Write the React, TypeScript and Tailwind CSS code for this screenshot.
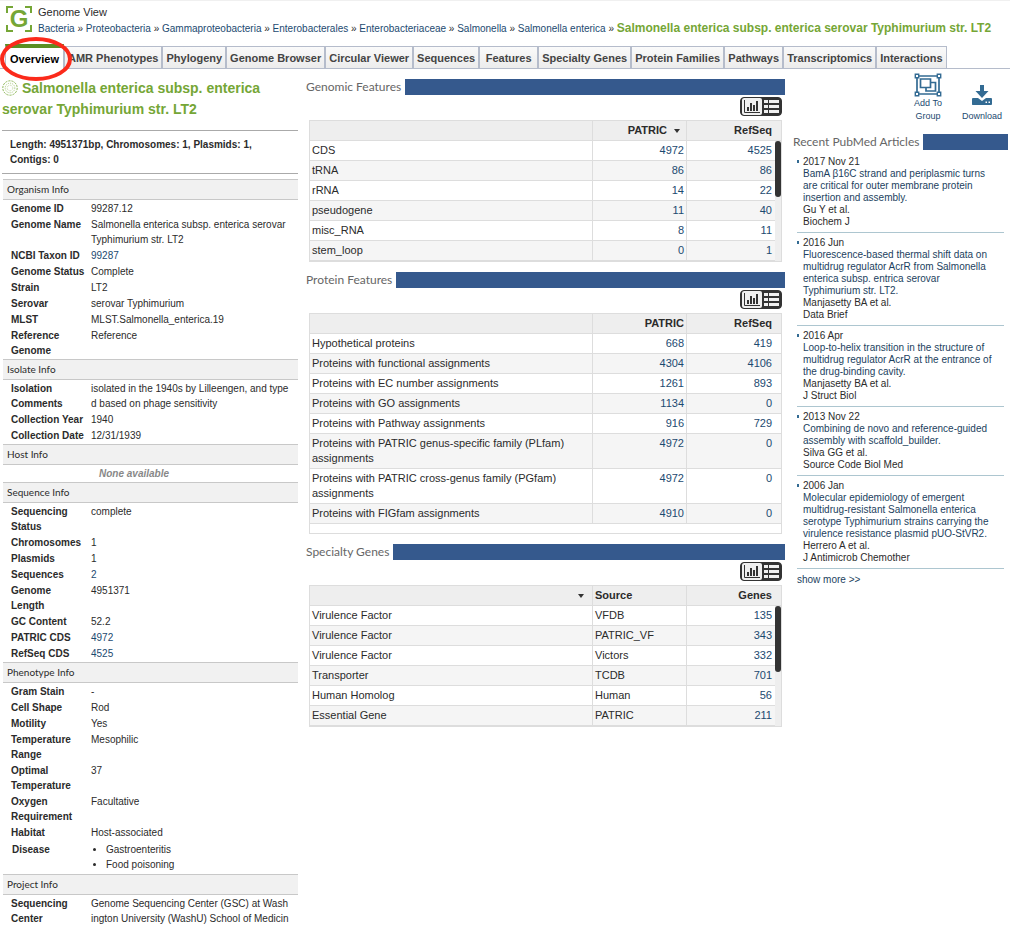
import type { ReactNode } from "react";

const lineage = [
  "Bacteria",
  "Proteobacteria",
  "Gammaproteobacteria",
  "Enterobacterales",
  "Enterobacteriaceae",
  "Salmonella",
  "Salmonella enterica",
];

const tabs = [
  "Overview",
  "AMR Phenotypes",
  "Phylogeny",
  "Genome Browser",
  "Circular Viewer",
  "Sequences",
  "Features",
  "Specialty Genes",
  "Protein Families",
  "Pathways",
  "Transcriptomics",
  "Interactions",
];

type InfoRow = { label: string; value?: string; link?: boolean; list?: string[] };

const info: { title: string; rows: InfoRow[] }[] = [
  {
    title: "Organism Info",
    rows: [
      { label: "Genome ID", value: "99287.12" },
      { label: "Genome Name", value: "Salmonella enterica subsp. enterica serovar Typhimurium str. LT2" },
      { label: "NCBI Taxon ID", value: "99287", link: true },
      { label: "Genome Status", value: "Complete" },
      { label: "Strain", value: "LT2" },
      { label: "Serovar", value: "serovar Typhimurium" },
      { label: "MLST", value: "MLST.Salmonella_enterica.19" },
      { label: "Reference\nGenome", value: "Reference" },
    ],
  },
  {
    title: "Isolate Info",
    rows: [
      { label: "Isolation\nComments", value: "isolated in the 1940s by Lilleengen, and typed based on phage sensitivity" },
      { label: "Collection Year", value: "1940" },
      { label: "Collection Date", value: "12/31/1939" },
    ],
  },
  { title: "Host Info", rows: [] },
  {
    title: "Sequence Info",
    rows: [
      { label: "Sequencing\nStatus", value: "complete" },
      { label: "Chromosomes", value: "1" },
      { label: "Plasmids", value: "1" },
      { label: "Sequences", value: "2", link: true },
      { label: "Genome\nLength", value: "4951371" },
      { label: "GC Content", value: "52.2" },
      { label: "PATRIC CDS", value: "4972", link: true },
      { label: "RefSeq CDS", value: "4525", link: true },
    ],
  },
  {
    title: "Phenotype Info",
    rows: [
      { label: "Gram Stain", value: "-" },
      { label: "Cell Shape", value: "Rod" },
      { label: "Motility", value: "Yes" },
      { label: "Temperature\nRange", value: "Mesophilic" },
      { label: "Optimal\nTemperature", value: "37" },
      { label: "Oxygen\nRequirement", value: "Facultative" },
      { label: "Habitat", value: "Host-associated" },
      { label: "Disease", list: ["Gastroenteritis", "Food poisoning"] },
    ],
  },
  {
    title: "Project Info",
    rows: [
      {
        label: "Sequencing\nCenter",
        value: "Genome Sequencing Center (GSC) at Washington University (WashU) School of Medicin",
      },
    ],
  },
];

const genomic = [
  ["CDS", "4972", "4525"],
  ["tRNA", "86", "86"],
  ["rRNA", "14", "22"],
  ["pseudogene", "11", "40"],
  ["misc_RNA", "8", "11"],
  ["stem_loop", "0", "1"],
];

const protein = [
  ["Hypothetical proteins", "668", "419"],
  ["Proteins with functional assignments", "4304", "4106"],
  ["Proteins with EC number assignments", "1261", "893"],
  ["Proteins with GO assignments", "1134", "0"],
  ["Proteins with Pathway assignments", "916", "729"],
  ["Proteins with PATRIC genus-specific family (PLfam) assignments", "4972", "0"],
  ["Proteins with PATRIC cross-genus family (PGfam) assignments", "4972", "0"],
  ["Proteins with FIGfam assignments", "4910", "0"],
];

const specialty = [
  ["Virulence Factor", "VFDB", "135"],
  ["Virulence Factor", "PATRIC_VF", "343"],
  ["Virulence Factor", "Victors", "332"],
  ["Transporter", "TCDB", "701"],
  ["Human Homolog", "Human", "56"],
  ["Essential Gene", "PATRIC", "211"],
];

const articles = [
  {
    date: "2017 Nov 21",
    title: "BamA β16C strand and periplasmic turns are critical for outer membrane protein insertion and assembly.",
    author: "Gu Y et al.",
    journal: "Biochem J",
  },
  {
    date: "2016 Jun",
    title:
      "Fluorescence-based thermal shift data on multidrug regulator AcrR from Salmonella enterica subsp. entrica serovar Typhimurium str. LT2.",
    author: "Manjasetty BA et al.",
    journal: "Data Brief",
  },
  {
    date: "2016 Apr",
    title:
      "Loop-to-helix transition in the structure of multidrug regulator AcrR at the entrance of the drug-binding cavity.",
    author: "Manjasetty BA et al.",
    journal: "J Struct Biol",
  },
  {
    date: "2013 Nov 22",
    title: "Combining de novo and reference-guided assembly with scaffold_builder.",
    author: "Silva GG et al.",
    journal: "Source Code Biol Med",
  },
  {
    date: "2006 Jan",
    title:
      "Molecular epidemiology of emergent multidrug-resistant Salmonella enterica serotype Typhimurium strains carrying the virulence resistance plasmid pUO-StVR2.",
    author: "Herrero A et al.",
    journal: "J Antimicrob Chemother",
  },
];

function Logo() {
  return (
    <div className="relative mt-px grid size-7 shrink-0 place-items-center">
      <svg viewBox="0 0 28 28" className="absolute inset-0 size-7" fill="none" stroke="#75a636" strokeWidth="2" aria-hidden="true">
        <path d="M2 8V2H8M20 2H26V8M26 20V26H20M8 26H2V20" />
      </svg>
      <span className="text-2xl leading-7 font-bold text-[#75a636]">G</span>
    </div>
  );
}

function Header() {
  return (
    <header className="flex gap-[5px] border-t border-[#f0f0f0] pt-[3px] pl-[5px]">
      <Logo />
      <div className="text-[10px] leading-4">
        <div className="text-[11px]">Genome View</div>
        <nav aria-label="Lineage" className="whitespace-nowrap">
          {lineage.map((name) => (
            <span key={name}>
              <a href="#" className="text-[#1c4a70]">{name}</a> »{" "}
            </span>
          ))}
          <span className="text-xs leading-4 font-bold text-[#75a636]">
            Salmonella enterica subsp. enterica serovar Typhimurium str. LT2
          </span>
        </nav>
      </div>
    </header>
  );
}

function Tabs() {
  return (
    <div className="relative mt-[7px]">
      <div role="tablist" className="flex items-end border-b border-[#b5bccb] pl-[5px]">
        {tabs.map((tab, i) => (
          <button
            key={tab}
            role="tab"
            type="button"
            aria-selected={i === 0}
            className={
              i === 0
                ? "-mb-px h-[25px] min-w-[59px] border-x border-t-4 border-x-[#b5bccb] border-t-[#5b8f22] bg-white px-[3px] pt-px font-bold whitespace-nowrap text-black"
                : "h-[22px] min-w-[59px] border-x border-t border-[#b5bccb] bg-linear-to-b from-[#fafafa] to-[#ececec] px-[3px] pt-px font-bold whitespace-nowrap text-[#444]"
            }
          >
            {tab}
          </button>
        ))}
      </div>
      <svg viewBox="0 0 74 46" className="pointer-events-none absolute -top-2 -left-px h-[46px] w-[74px]" aria-hidden="true">
        <ellipse cx="37" cy="23" rx="34" ry="20" fill="none" stroke="#fb2a1b" strokeWidth="4" />
      </svg>
    </div>
  );
}

function GenomeBadge() {
  return (
    <svg viewBox="0 0 16 16" className="mr-1 inline-block size-4 align-[-3px]" fill="none" stroke="#8fb85a" aria-hidden="true">
      <circle cx="8" cy="8" r="7.2" strokeWidth="1" strokeDasharray="2.2 1" />
      <circle cx="8" cy="8" r="4.8" strokeWidth="0.7" strokeDasharray="1.2 1" />
      <circle cx="8" cy="8" r="2.8" strokeWidth="0.6" strokeDasharray="0.8 0.8" />
    </svg>
  );
}

function InfoPanel() {
  return (
    <aside className="pl-[2px] text-[10px]">
      <h1 className="pt-[9px] text-sm leading-[21px] font-bold text-[#75a636]">
        <GenomeBadge />
        Salmonella enterica subsp. enterica serovar Typhimurium str. LT2
      </h1>
      <div className="mt-[10px] mb-[5px] border-y border-[#aaa] py-[6px] pr-8 pl-2 leading-[15px] font-bold">
        Length: 4951371bp, Chromosomes: 1, Plasmids: 1, Contigs: 0
      </div>
      <div className="ml-px">
        {info.map((section) => (
          <section key={section.title}>
            <h2 className="mb-px border-y border-[#c8c8c8] bg-[#f1f1f1] pl-1 font-['Lato',sans-serif] leading-[19px]">
              {section.title}
            </h2>
            {section.rows.length === 0 && (
              <p className="pl-24 leading-4 font-bold text-[#888] italic">None available</p>
            )}
            {section.rows.map((row) =>
              row.list ? (
                <div key={row.label} className="flex py-px pb-[2px] leading-[15px]">
                  <div className="w-[88px] pl-[9px] font-bold">{row.label}</div>
                  <ul className="list-disc pl-[15px]">
                    {row.list.map((item) => (
                      <li key={item}>{item}</li>
                    ))}
                  </ul>
                </div>
              ) : (
                <div key={row.label} className="flex pb-px leading-[15px]">
                  <div className="w-[88px] shrink-0 pl-2 font-bold whitespace-pre-line">{row.label}</div>
                  <div className={row.label === "Genome Name" ? "pr-2" : "pr-2 break-all"}>
                    {row.link ? <a href="#" className="text-[#1c4a70]">{row.value}</a> : row.value}
                  </div>
                </div>
              ),
            )}
          </section>
        ))}
      </div>
    </aside>
  );
}

function BarHeading({ children }: { children: ReactNode }) {
  return (
    <div className="flex h-4 items-center gap-1">
      <h2 className="font-['Lato',sans-serif] text-xs leading-4 whitespace-nowrap text-[#666]">{children}</h2>
      <div className="h-4 flex-1 bg-[#35598d]" />
    </div>
  );
}

function ViewToggle() {
  return (
    <div className="mt-[2px] mr-[3px] ml-auto flex h-[19px] w-[42px] overflow-hidden rounded-[4px] border border-[#333] bg-[#333]">
      <button type="button" aria-label="Chart view" className="ml-px h-[17px] w-5 rounded-[2px] bg-[#f0f0f0]">
        <svg viewBox="0 0 20 17" className="h-[17px] w-5" aria-hidden="true">
          <path d="M2.500 2V14.500H18" fill="none" stroke="#333" />
          <path d="M5 9h2v4H5zM8 5h2v8H8zM11 7h2v6h-2zM14 3h2v10h-2z" fill="#333" />
        </svg>
      </button>
      <button type="button" aria-label="Table view" className="h-[17px] w-[19px]">
        <svg viewBox="0 0 19 17" className="h-[17px] w-[19px]" fill="#f0f0f0" aria-hidden="true">
          <path d="M2 2h4v3H2zM7 2h10v3H7zM2 7h4v3H2zM7 7h10v3H7zM2 12h4v3H2zM7 12h10v3H7z" />
        </svg>
      </button>
    </div>
  );
}

function SortArrow() {
  return (
    <svg viewBox="0 0 6 4" className="inline-block h-1 w-1.5 align-middle" aria-hidden="true">
      <path d="M0 0H6L3 4Z" fill="#333" />
    </svg>
  );
}

type GridProps = {
  head: [ReactNode, ReactNode, ReactNode];
  rows: string[][];
  middleText?: boolean;
  thumb?: "short" | "long";
  label: string;
};

function DataGrid({ head, rows, middleText, thumb, label }: GridProps) {
  const mid = middleText ? "text-left" : "text-right";
  return (
    <div className={"relative mx-[3px] mt-1 border border-[#ddd]" + (thumb ? "" : " pb-[9px]")}>
      <table aria-label={label} className="w-full table-fixed border-separate border-spacing-0 leading-[15px]">
        <colgroup>
          <col />
          <col className="w-[94px]" />
          <col className="w-[94px]" />
        </colgroup>
        <thead>
          <tr className="bg-[#eee]">
            <th className="border-r border-b border-[#ddd] px-2 py-[2px] text-right">{head[0]}</th>
            <th className={"border-r border-b border-[#ddd] px-[2px] py-[2px] " + mid}>{head[1]}</th>
            <th className="border-b border-[#ddd] py-[2px] pr-[9px] text-right">{head[2]}</th>
          </tr>
        </thead>
        <tbody>
          {rows.map((row, i) => (
            <tr key={i} className="even:bg-[#f5f5f5]">
              <td className="border-r border-b border-[#ddd] py-[2px] pr-4 pl-[2px] align-top">{row[0]}</td>
              <td className={"border-r border-b border-[#ddd] px-[2px] py-[2px] align-top " + mid}>
                {middleText ? row[1] : <a href="#" className="text-[#1c4a70]">{row[1]}</a>}
              </td>
              <td className="border-b border-[#ddd] py-[2px] pr-[9px] text-right align-top">
                <a href="#" className="text-[#1c4a70]">{row[2]}</a>
              </td>
            </tr>
          ))}
        </tbody>
      </table>
      {thumb && (
        <div className="absolute top-5 right-0 bottom-0 w-1.5 bg-[#eee]">
          <div className={thumb === "short" ? "h-14 rounded-full bg-[#333]" : "h-[66px] rounded-full bg-[#333]"} />
        </div>
      )}
    </div>
  );
}

function Features() {
  return (
    <main className="flex flex-col gap-[10px] pt-[10px]">
      <section>
        <BarHeading>Genomic Features</BarHeading>
        <ViewToggle />
        <DataGrid
          label="Genomic Features"
          thumb="short"
          head={["", <span className="pr-1">PATRIC <span className="pl-1"><SortArrow /></span></span>, "RefSeq"]}
          rows={genomic}
        />
      </section>
      <section>
        <BarHeading>Protein Features</BarHeading>
        <ViewToggle />
        <DataGrid label="Protein Features" head={["", "PATRIC", "RefSeq"]} rows={protein} />
      </section>
      <section>
        <BarHeading>Specialty Genes</BarHeading>
        <ViewToggle />
        <DataGrid
          label="Specialty Genes"
          thumb="long"
          middleText
          head={[<SortArrow />, "Source", "Genes"]}
          rows={specialty}
        />
      </section>
    </main>
  );
}

function Articles() {
  return (
    <aside className="pr-[2px] text-[10px]">
      <div className="flex items-end justify-end gap-[18px] pt-1 pr-1.5 text-[9px] leading-[13px] text-[#1c4a70]">
        <button type="button" className="flex w-8 flex-col items-center">
          <svg viewBox="0 0 28 24" className="h-6 w-7" fill="none" stroke="#336b93" strokeWidth="1.700" aria-hidden="true">
            <path d="M5 3H23M5 21H23M3 5V19M25 5V19" />
            <path d="M1.300 1.300h3.400v3.400H1.300zM23.300 1.300h3.400v3.400h-3.400zM1.300 19.300h3.400v3.400H1.300zM23.300 19.300h3.400v3.400h-3.400z" strokeWidth="1.400" />
            <path d="M6.500 6H16.500V14.500H6.500zM17 9.500H21.500V18H12V14.500" />
          </svg>
          Add To Group
        </button>
        <button type="button" className="flex flex-col items-center">
          <svg viewBox="0 0 22 21" className="mb-1 h-[21px] w-[22px]" fill="#336b93" aria-hidden="true">
            <path d="M9 0h4v6h4.500L11 13 4.500 6H9z" />
            <path d="M1.500 13H7l4 3 4-3h5.500l.5 1v5.500l-1 .5H1.500l-.5-.5V14zM14.500 16.500v1.500H16v-1.500zM17.500 16.500v1.500H19v-1.500z" fillRule="evenodd" />
          </svg>
          Download
        </button>
      </div>
      <div className="mt-[11px]">
        <BarHeading>Recent PubMed Articles</BarHeading>
      </div>
      <ul className="mt-[5px] mr-1 ml-1 leading-3">
        {articles.map((a) => (
          <li key={a.date} className="relative mb-[3px] border-b border-[#adc6d0] pt-px pr-[9px] pb-1 pl-1.5">
            <span className="absolute top-[5px] left-0 h-[3px] w-0.5 bg-[#336b93]" />
            <div>{a.date}</div>
            <a href="#" className="block text-[#1c3f60]">{a.title}</a>
            <div>{a.author}</div>
            <div>{a.journal}</div>
          </li>
        ))}
      </ul>
      <a href="#" className="ml-1 block leading-4 text-[#1c3f60]">show more &gt;&gt;</a>
    </aside>
  );
}

export default function App() {
  return (
    <div className="bg-white font-['Liberation_Sans',Arial,sans-serif] text-[11px] text-[#2b2b2b]">
      <Header />
      <Tabs />
      <div className="grid grid-cols-[298px_minmax(0,1fr)_217px] gap-x-2">
        <InfoPanel />
        <Features />
        <Articles />
      </div>
    </div>
  );
}
